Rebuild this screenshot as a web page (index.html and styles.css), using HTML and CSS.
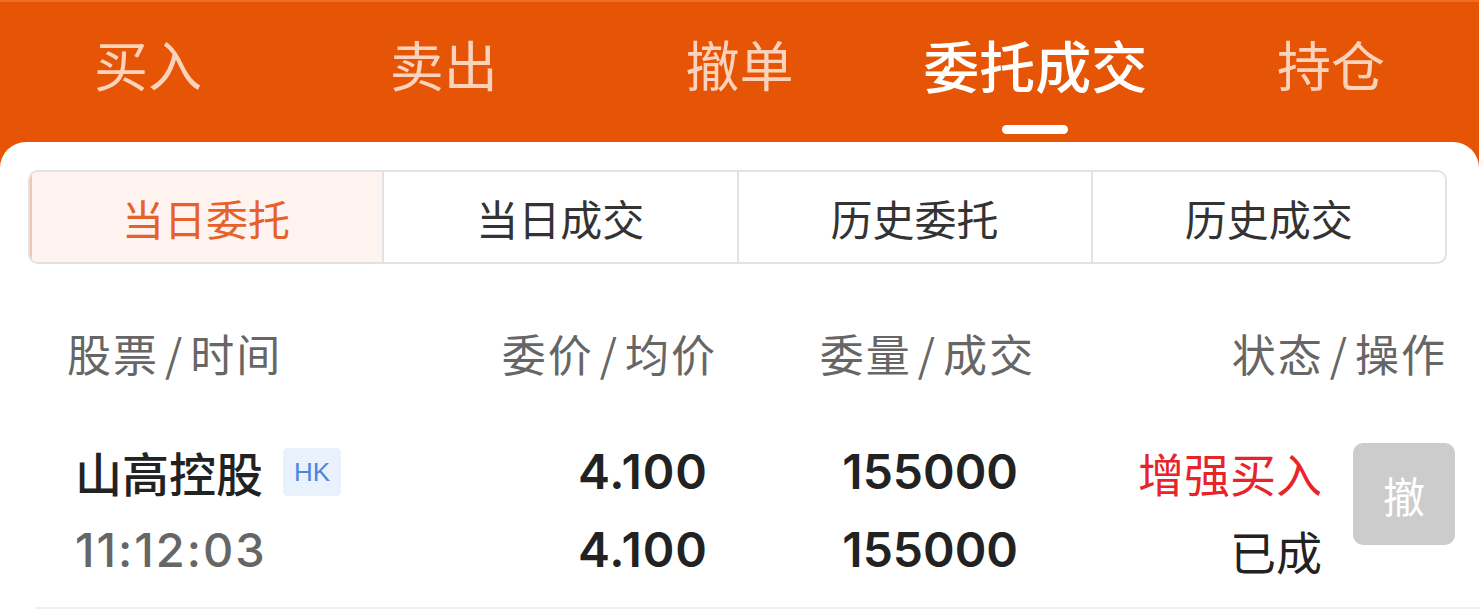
FILE: index.html
```html
<!DOCTYPE html>
<html lang="zh-CN">
<head>
<meta charset="utf-8">
<title>委托成交</title>
<link rel="stylesheet" href="styles.css">
</head>
<body>
<div class="app">
  <nav class="topbar">
    <div class="tab"><span class="tab-label">买入</span></div>
    <div class="tab"><span class="tab-label">卖出</span></div>
    <div class="tab"><span class="tab-label">撤单</span></div>
    <div class="tab active"><span class="tab-label">委托成交</span><span class="indicator"></span></div>
    <div class="tab"><span class="tab-label">持仓</span></div>
  </nav>
  <main class="card">
    <div class="segments">
      <div class="seg active">当日委托</div>
      <div class="seg">当日成交</div>
      <div class="seg">历史委托</div>
      <div class="seg">历史成交</div>
    </div>
    <div class="list">
      <div class="head-row">
        <div class="hc left">股票<span class="sl">/</span>时间</div>
        <div class="hc">委价<span class="sl">/</span>均价</div>
        <div class="hc">委量<span class="sl">/</span>成交</div>
        <div class="hc">状态<span class="sl">/</span>操作</div>
      </div>
      <div class="data-row">
        <div class="c-stock">
          <div class="line name-line"><span class="name">山高控股</span><span class="badge">HK</span></div>
          <div class="line time">11:12:03</div>
        </div>
        <div class="c-num c-price">
          <div class="line">4.100</div>
          <div class="line">4.100</div>
        </div>
        <div class="c-num c-qty">
          <div class="line">155000</div>
          <div class="line">155000</div>
        </div>
        <div class="c-status">
          <div class="status-text">
            <div class="line red">增强买入</div>
            <div class="line done">已成</div>
          </div>
          <div class="cancel-btn">撤</div>
        </div>
      </div>
    </div>
  </main>
</div>
</body>
</html>
```

FILE: styles.css
```css
* { box-sizing: border-box; }
html, body {
  margin: 0;
  padding: 0;
  background: #ffffff;
}
body {
  font-family: "Noto Sans CJK SC", "Noto Sans", sans-serif;
  color: #222;
}
.app {
  width: 1479px;
  height: 615px;
  background: #e65506;
  overflow: hidden;
  display: flex;
  flex-direction: column;
}
.topbar {
  height: 142px;
  display: flex;
  border-top: 2px solid #ee6d22;
  flex: none;
}
.tab {
  flex: 1;
  display: flex;
  flex-direction: column;
  align-items: center;
  padding-top: 32px;
}
.tab-label {
  font-size: 54px;
  line-height: 60px;
  color: #fbd3bc;
  white-space: nowrap;
}
.tab.active .tab-label {
  color: #ffffff;
  font-size: 56px;
  font-weight: 500;
}
.indicator {
  margin-top: 31px;
  width: 66px;
  height: 9px;
  border-radius: 5px;
  background: #ffffff;
}
.card {
  flex: 1;
  background: #ffffff;
  border-radius: 26px 26px 0 0;
  padding: 28px 32px 0 28px;
}
.segments {
  display: flex;
  height: 94px;
  border: 2px solid #e2e2e6;
  border-radius: 10px;
  overflow: hidden;
}
.seg {
  flex: 1;
  display: flex;
  align-items: center;
  justify-content: center;
  font-size: 42px;
  color: #333;
  border-left: 2px solid #e2e2e6;
}
.seg:first-child { border-left: none; }
.seg.active {
  background: #fef3ef;
  color: #e5622a;
  box-shadow: inset 2px 0 0 #f0c6ae;
}
.list {
  padding-left: 39px;
}
.head-row {
  display: grid;
  grid-template-columns: 380px 270px 318px 1fr;
  height: 136px;
  padding-top: 44px;
}
.hc {
  font-size: 44px;
  line-height: 90px;
  color: #666;
  text-align: right;
  letter-spacing: 2px;
  white-space: nowrap;
}
.hc .sl {
  margin: 0 6px;
}
.hc.left { text-align: left; }
.data-row {
  display: grid;
  grid-template-columns: 380px 270px 318px 1fr;
  padding-top: 33px;
  padding-bottom: 18px;
  border-bottom: 2px solid #efefef;
  margin-left: -32px;
  padding-left: 32px;
  margin-right: -32px;
  padding-right: 32px;
}
.line {
  height: 78px;
  line-height: 78px;
  white-space: nowrap;
}
.c-stock { padding-left: 8px; }
.name-line {
  display: flex;
  align-items: center;
}
.name {
  font-size: 47px;
  font-weight: 500;
  color: #222;
}
.badge {
  margin-left: 20px;
  width: 58px;
  height: 48px;
  border-radius: 5px;
  background: #e9f1fc;
  color: #4a88de;
  font-family: "Liberation Sans", "Noto Sans", sans-serif;
  font-size: 26px;
  line-height: 48px;
  text-align: center;
}
.time {
  font-family: Inter, "Noto Sans CJK SC", sans-serif;
  font-size: 47px;
  font-weight: 500;
  color: #666;
  letter-spacing: 2px;
}
.c-num {
  font-family: Inter, "Noto Sans CJK SC", sans-serif;
  font-size: 48px;
  font-weight: 600;
  color: #222;
  text-align: right;
}
.c-price { padding-right: 9px; letter-spacing: 1px; }
.c-qty { padding-right: 17px; }
.c-status {
  display: flex;
  justify-content: flex-end;
  align-items: flex-start;
  margin-right: -8px;
}
.status-text {
  text-align: right;
  font-size: 46px;
}
.red { color: #e8242b; }
.done { color: #222; }
.cancel-btn {
  margin-left: 31px;
  margin-top: 10px;
  width: 102px;
  height: 102px;
  border-radius: 10px;
  background: #cccccc;
  color: #ffffff;
  font-size: 42px;
  display: flex;
  align-items: center;
  justify-content: center;
}
```
